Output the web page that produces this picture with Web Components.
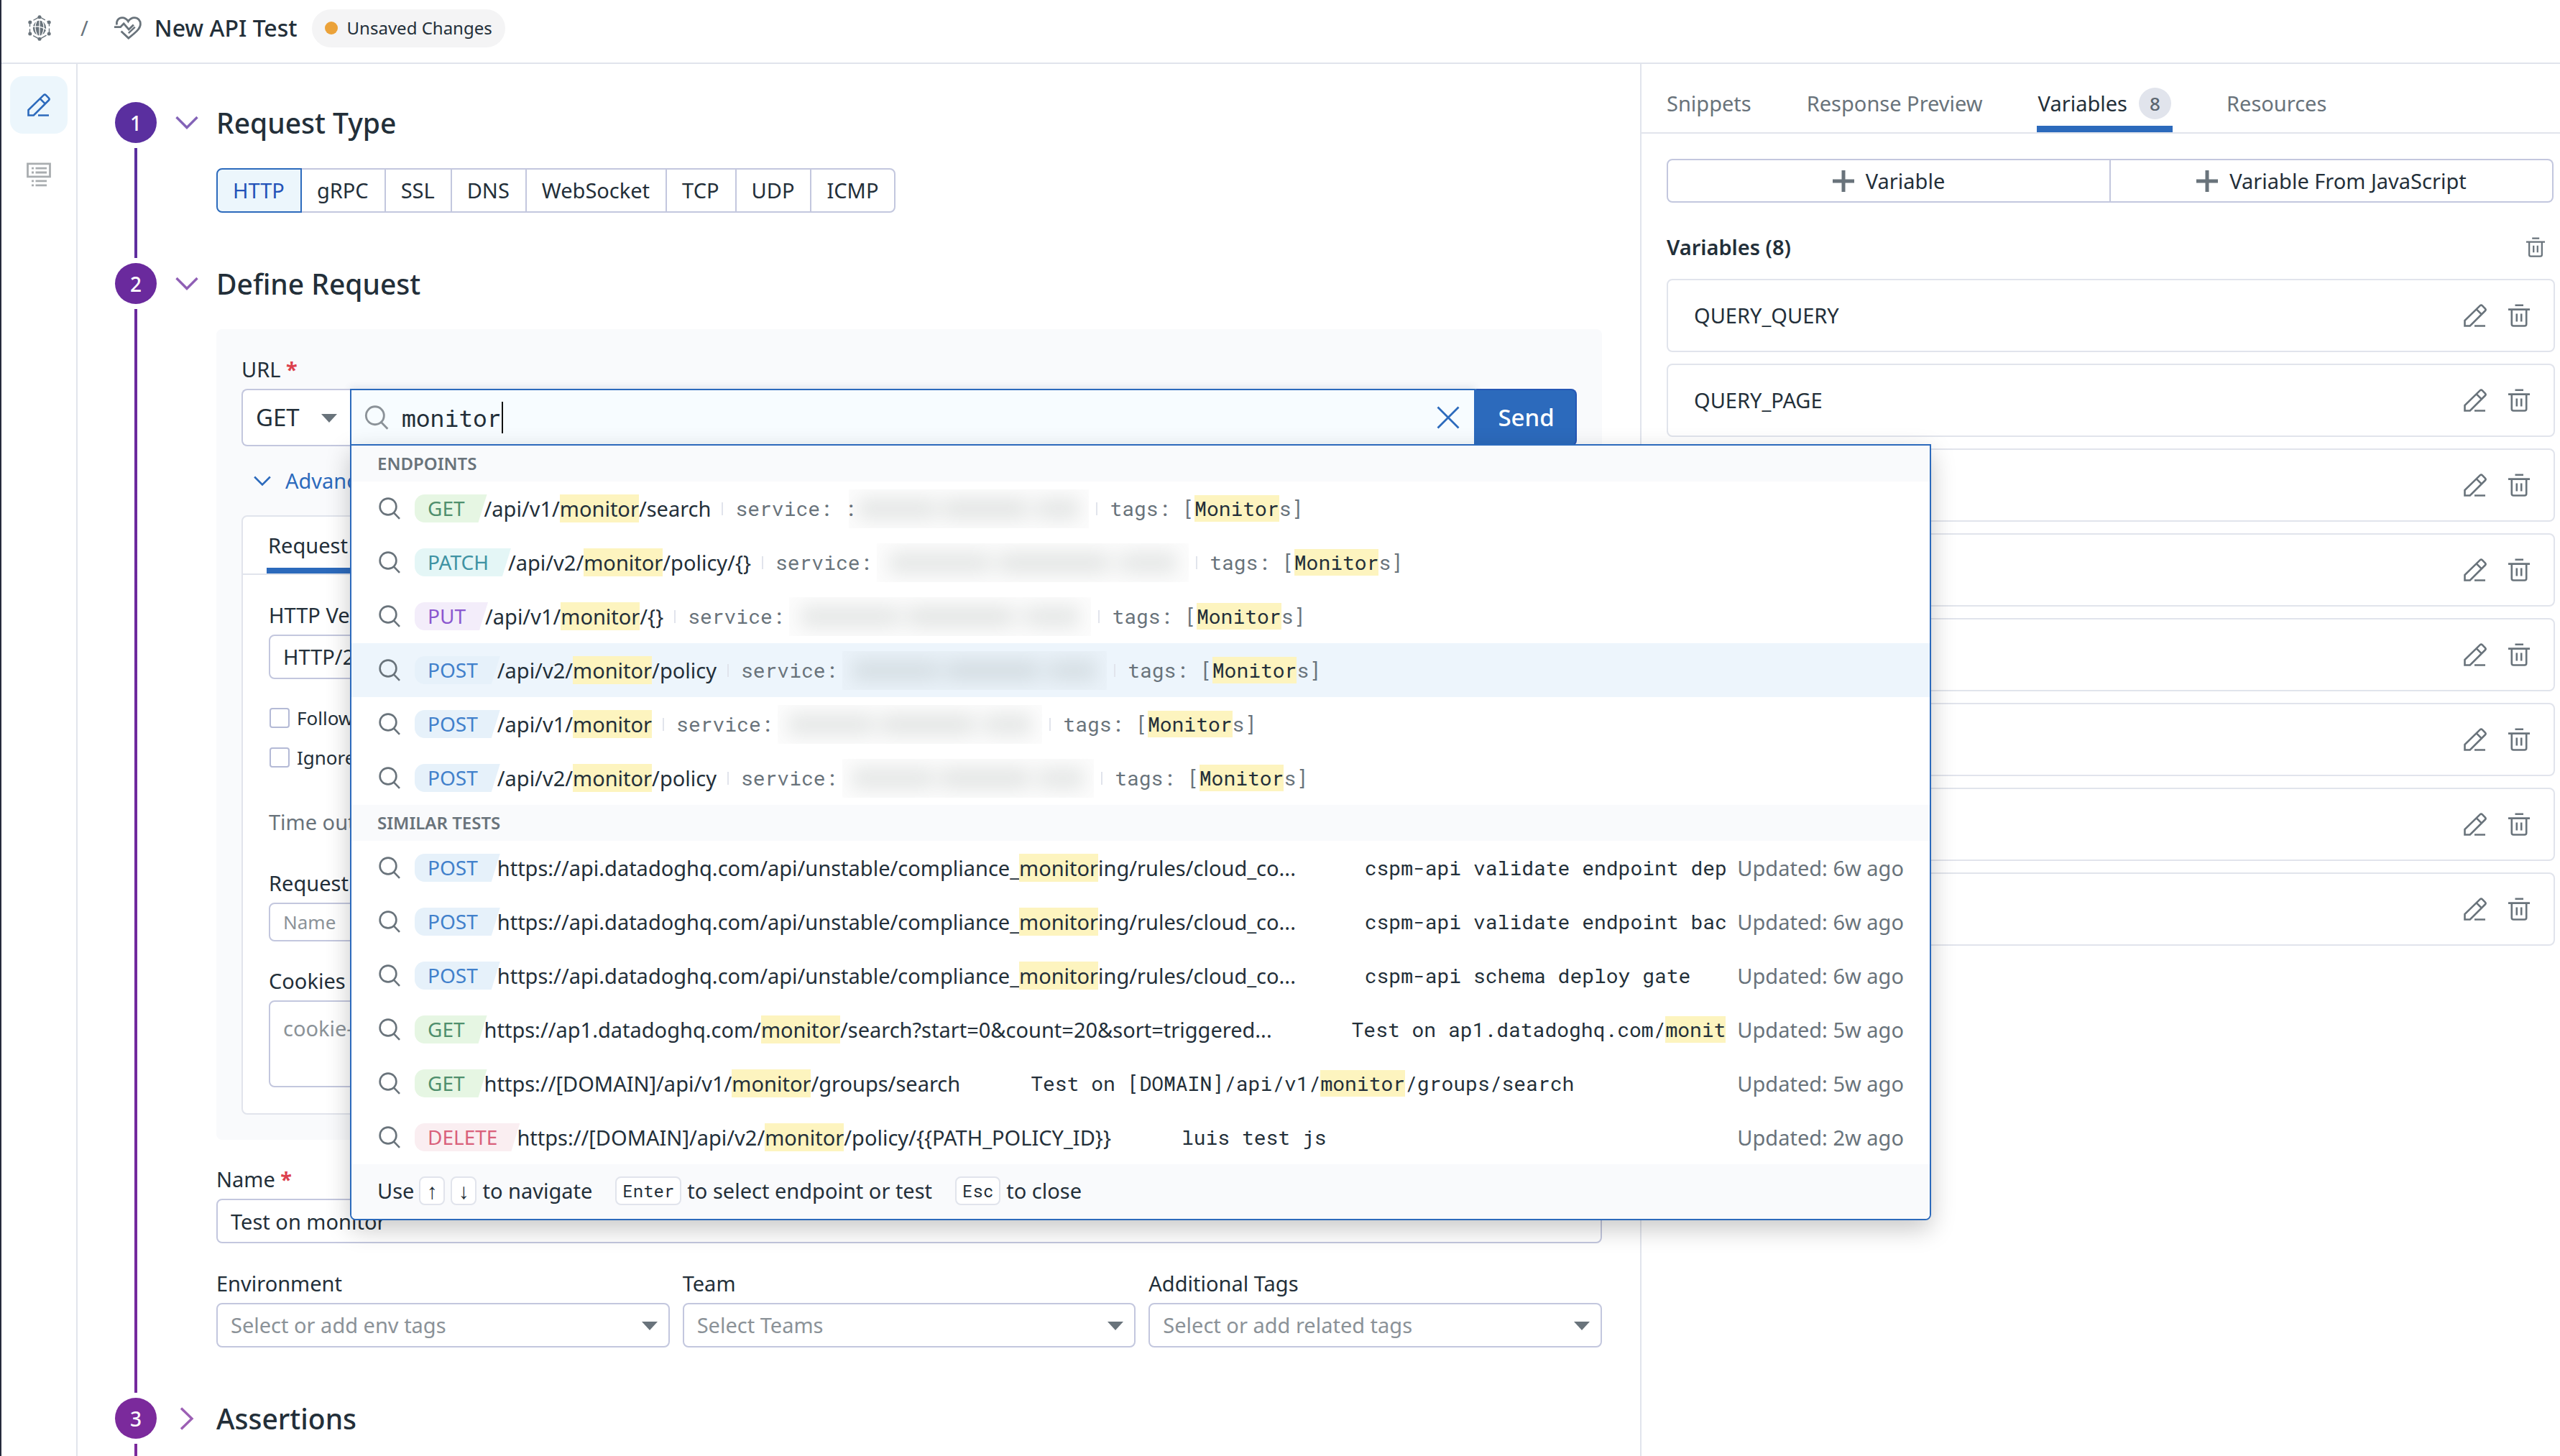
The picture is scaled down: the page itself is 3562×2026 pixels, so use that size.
<!DOCTYPE html>
<html lang="en">
<head>
<meta charset="utf-8">
<title>New API Test</title>
<style>
:root{
  --ink:#232f39; --muted:#69737b; --hint:#8b9298; --blue:#2c6abc; --line:#e1e4ec; --edge:#c3c7de;
  --wash:#f9fafc; --select:#edf5fc; --mark:#fdf4bf;
  --mono:"Roboto Mono","Noto Sans Mono","Liberation Mono",monospace;
}
*{box-sizing:border-box}
body{margin:0;min-height:100vh;display:flex;flex-direction:column;background:#fff;color:var(--ink);
  font:29px/38px "Noto Sans",sans-serif;border-left:2px solid #262b3d}
.shell{flex:1;display:flex}
main{flex:1;min-width:0;display:flex;flex-direction:column;padding:53px 53px 0 52px}
aside{flex:none;width:1280px;border-left:2px solid var(--line)}
.panel{background:var(--wash);border-radius:8px;padding:37px 35px 35px}
.trio{display:grid;grid-template-columns:1fr 1fr 1fr;gap:18px;margin-top:37px}
.name{margin-top:36px}
</style>
</head>
<body>
<app-header>New API Test</app-header>
<div class="shell">
  <side-nav></side-nav>
  <main>
    <step-section num="1" tone="#5a2f9f" next="#5f2e9f" heading="Request Type" open>
      <type-picker options="HTTP,gRPC,SSL,DNS,WebSocket,TCP,UDP,ICMP"></type-picker>
    </step-section>
    <step-section num="2" tone="#6a2a9d" next="#75299d" heading="Define Request" open>
      <div class="panel">
        <url-bar></url-bar>
        <advanced-options></advanced-options>
      </div>
      <form-field class="name" kind="text" label="Name" required value="Test on monitor"></form-field>
      <div class="trio">
        <form-field kind="select" label="Environment" hint="Select or add env tags"></form-field>
        <form-field kind="select" label="Team" hint="Select Teams"></form-field>
        <form-field kind="select" label="Additional Tags" hint="Select or add related tags"></form-field>
      </div>
    </step-section>
    <step-section num="3" tone="#7b2a9c" next="#7b2a9c" heading="Assertions" last></step-section>
  </main>
  <aside><variables-panel></variables-panel></aside>
</div>

<script>
const BASE = `*{box-sizing:border-box}
button,input,select,textarea{font:inherit;color:inherit;margin:0;border-radius:0;outline:none}
button{background:none;border:0;padding:0;cursor:pointer}
mark{background:var(--mark);color:inherit}
a{color:inherit;text-decoration:none}
`;
function define(name, css, render) {
  customElements.define(name, class extends HTMLElement {
    connectedCallback() {
      if (this.shadowRoot) return;
      const t = document.createElement('template');
      t.innerHTML = `<style>${BASE}${css}</style>${render(this)}`;
      this.attachShadow({mode: 'open'}).append(t.content.cloneNode(true));
    }
  });
}

const ICONS = {
  pencil: ['0 0 32 32', '<path d="M1.5 30.5V23L22.7 2.4q1.6-1.6 3.2 0l3.9 3.9q1.6 1.6 0 3.2L8.8 30.5zM17.8 7.4l7 7M15 30.5h15" stroke-width="2.6"/>'],
  trash: ['0 0 30 32', '<path d="M9.5 1.8h11.5M0 7.6h30M4.8 8v20q0 2.5 2.5 2.5h15.4q2.5 0 2.5-2.5V8M11.8 13.5v11M18.2 13.5v11" stroke-width="2.6"/>'],
  search: ['0 0 30 31', '<circle cx="13" cy="13" r="11.4" stroke-width="2.6"/><path d="M20.6 21.2l8.4 8.6" stroke-width="2.6"/>'],
  close: ['0 0 32 32', '<path d="M1.5 1.5l29 29M30.5 1.5l-29 29" stroke-width="2.8"/>'],
  plus: ['0 0 30 30', '<path d="M15 0v30M0 15h30" stroke-width="5"/>'],
  down: ['0 0 32 20', '<path d="M1.5 2L16 16.5 30.5 2" stroke-width="3.4"/>'],
  right: ['0 0 20 32', '<path d="M2 1.5L17 16 2 30.5" stroke-width="3.4"/>'],
  caret: ['0 0 22 12', '<path d="M0 0h22L11 12z" fill="currentColor" stroke="none"/>'],
  heart: ['0 0 38 32', '<path d="M3.5 11.5C2.6 5 6.5 1.6 11 1.6c3.6 0 6.4 2 8.4 5.2C21.5 3.6 24.5 1.6 28 1.6c5 0 8.6 4 8.4 9-.2 6.4-6.5 11.4-16.6 19.5L9.6 20.5M0 14.7h8.6l4.6-4.8 7 8 6.7-6.4" stroke-width="2.8"/><path d="M19.8 23.2l9-8.6" stroke-width="2.4"/>'],
  globe: ['0 0 32 36', '<path d="M16 2.5L29.5 10v16L16 33.5 2.5 26V10z" stroke-width="1.4" stroke-dasharray="9 3"/><circle cx="16" cy="18" r="11.6" fill="#fff" stroke="none"/><ellipse cx="16" cy="18" rx="9.2" ry="10.4" fill="currentColor" stroke="none"/><path d="M16 7v22M6 16q10-2 20 4.5M12.2 8q-5 10 1 20.5M19.8 8q5 10-1 20.5" stroke="#fff" stroke-width="1.3"/><g fill="currentColor" stroke="none"><circle cx="16" cy="2.8" r="2.5"/><circle cx="16" cy="33.2" r="2.5"/><circle cx="2.8" cy="10" r="2.5"/><circle cx="29.2" cy="10" r="2.5"/><circle cx="2.8" cy="26" r="2.5"/><circle cx="29.2" cy="26" r="2.5"/></g>'],
  list: ['0 0 34 34', '<path d="M1.5 1.8h31v18h-31z" stroke-width="2.8"/><path d="M7 8.2h3M12.5 8.2H28M7 14h3M12.5 14H28M7 25.8h3M12.5 25.8H28M7 31.8h3M12.5 31.8H28" stroke-width="2.8"/>'],
};
define('ui-icon', `:host{display:inline-flex;flex:none}svg{width:100%;height:100%;display:block;overflow:visible}`,
  el => { const [box, body] = ICONS[el.getAttribute('name')];
    return `<svg viewBox="${box}" fill="none" stroke="currentColor" aria-hidden="true">${body}</svg>`; });

define('app-header', `
:host{display:flex;align-items:center;height:89px;padding:0 0 9px 37px;border-bottom:2px solid var(--line)}
.globe{width:32px;height:36px;color:var(--muted)}
.slash{margin:0 36px 0 41px;color:var(--muted)}
.heart{width:38px;height:32px;color:var(--muted)}
h1{margin:0 20px 0 18px;font-size:32px;line-height:44px;font-weight:500}
.pill{display:flex;align-items:center;gap:13px;height:53px;padding:0 18px;border-radius:27px;background:#f4f4f5;font-size:24px}
i{width:18px;height:18px;border-radius:50%;background:#eba239}`,
  () => `<ui-icon class="globe" name="globe"></ui-icon><span class="slash">/</span>
<ui-icon class="heart" name="heart"></ui-icon><h1><slot></slot></h1><span class="pill"><i></i>Unsaved Changes</span>`);

define('side-nav', `
:host{display:flex;flex-direction:column;align-items:center;width:106px;flex:none;padding-top:17px;border-right:2px solid var(--line)}
button{display:flex;align-items:center;justify-content:center;width:80px;height:80px;margin-bottom:17px;border-radius:18px;color:#a9adb0}
.on{background:#ecf6fc;color:var(--blue)}
.on ui-icon{width:32px;height:32px}
ui-icon{width:34px;height:34px}`,
  () => `<button class="on" aria-label="Edit"><ui-icon name="pencil"></ui-icon></button><button aria-label="Results"><ui-icon name="list"></ui-icon></button>`);

define('step-section', `
:host{display:flex;gap:26px}
:host([last]){flex:1}
.rail{display:flex;flex-direction:column;align-items:center;width:58px;flex:none}
b{width:58px;height:57px;border-radius:50%;display:grid;place-items:center;color:#fff;font-size:28px;font-weight:500}
.line{flex:1;width:4px;margin:7px 0}
:host([last]) .line{margin-bottom:0}
.fold{width:31px;height:57px;flex:none;display:grid;place-items:center;opacity:.75}
.down{width:32px;height:20px}.right{width:20px;height:32px}
.body{flex:1;min-width:0;padding-bottom:70px}
:host([last]) .body{padding-bottom:0}
h2{margin:0 0 35px;font-size:39px;line-height:57px;font-weight:500}
:host([last]) h2{margin:0}`,
  el => { const a = n => el.getAttribute(n), dir = el.hasAttribute('open') ? 'down' : 'right';
    return `<div class="rail"><b style="background:${a('tone')}">${a('num')}</b><div class="line" style="background:linear-gradient(${a('tone')},${a('next')})"></div></div>
<button class="fold" aria-label="Toggle section" style="color:${a('tone')}"><ui-icon class="${dir}" name="${dir}"></ui-icon></button>
<div class="body"><h2>${a('heading')}</h2><slot></slot></div>`; });

define('type-picker', `
:host{display:flex;height:62px}
button{padding:0 22px 0 21px;border:2px solid var(--edge);margin-left:-2px}
button.on{position:relative;margin:0;color:#2453b8;background:#ecf6fc;border-color:var(--blue);border-radius:8px 0 0 8px}
button:last-child{border-radius:0 8px 8px 0}`,
  el => el.getAttribute('options').split(',').map((o, i) => `<button${i ? '' : ' class="on"'}>${o}</button>`).join(''));

define('form-field', `
:host{display:block}
label{display:block;margin-bottom:8px}
label em{color:#dc3f4d;font-style:normal;font-weight:700}
.box{position:relative;display:flex}
input,select,textarea{width:100%;height:62px;padding:0 18px;background:#fff;border:2px solid var(--edge);border-radius:8px;appearance:none;resize:none;display:block}
:host([compact]) input{height:54px;font-size:26px}
textarea{height:121px;padding-top:18px;line-height:38px}
::placeholder{color:var(--hint);opacity:1}
select.hint{color:var(--hint)}
ui-icon{position:absolute;right:17px;top:26px;width:22px;height:12px;color:var(--muted);pointer-events:none}`,
  el => { const a = n => el.getAttribute(n) || '', k = a('kind');
    const c = k === 'select' ? `<select id="f" class="${a('hint') ? 'hint' : ''}"><option>${a('hint') || a('value')}</option></select><ui-icon name="caret"></ui-icon>`
      : k === 'area' ? `<textarea id="f" placeholder="${a('hint')}"></textarea>`
      : `<input id="f" type="text" value="${a('value')}" placeholder="${a('hint')}">`;
    return `<label for="f">${a('label')}${el.hasAttribute('required') ? ' <em>*</em>' : ''}</label><div class="box">${c}</div>`; });

define('url-bar', `
:host{display:block}
label{display:block;margin-bottom:8px}
label em{color:#dc3f4d;font-style:normal;font-weight:700}
.row{position:relative;display:flex;height:80px;font-size:33px}
.verb{position:relative;width:151px;flex:none}
.verb select{width:100%;height:100%;padding:0 18px;appearance:none;background:#fff;border:2px solid var(--edge);border-right:0;border-radius:8px 0 0 8px}
.verb ui-icon{position:absolute;right:18px;top:35px;width:22px;height:12px;color:var(--muted);pointer-events:none}
.find{flex:1;min-width:0;display:flex;align-items:center;padding:0 20px 0 18px;background:#f7fcff;border:2px solid var(--blue);box-shadow:0 -2px 10px rgba(30,60,110,.12);color:var(--hint)}
.find .s{width:34px;height:34px;margin-right:18px}
.find input{field-sizing:content;min-width:20px;height:48px;padding:0;border:0;background:none;font-family:var(--mono);color:var(--ink);caret-color:transparent}
.find i{width:2px;height:44px;background:#111}
.find button{margin-left:auto;color:var(--blue);display:flex}
.find .x{width:32px;height:32px}
.send{width:141px;flex:none;background:var(--blue);color:#fff;font-weight:500;border:2px solid #2556b5;border-left-color:var(--blue);border-radius:0 8px 8px 0}
suggest-menu{position:absolute;left:151px;top:77px;z-index:5}`,
  () => `<label for="u">URL <em>*</em></label>
<div class="row"><div class="verb"><select aria-label="Method"><option>GET</option></select><ui-icon name="caret"></ui-icon></div>
<div class="find"><ui-icon class="s" name="search"></ui-icon><input id="u" type="text" value="monitor"><i></i><button aria-label="Clear"><ui-icon class="x" name="close"></ui-icon></button></div>
<button class="send">Send</button><suggest-menu></suggest-menu></div>`);

define('method-tag', `
:host{display:block;flex:none;height:39px;font-size:28px;line-height:39px;padding:0 31px 0 18px;margin-right:-4px;border-radius:14px 0 0 14px;clip-path:polygon(0 0,100% 0,calc(100% - 12px) 100%,0 100%)}
:host([verb=GET]){background:#e6f6e3;color:#4f8f6d}
:host([verb=PATCH]){background:#e4f6f6;color:#3f93a3}
:host([verb=PUT]){background:#f3edfa;color:#8b57cf}
:host([verb=POST]){background:#e6f1fa;color:#4180cb}
:host([verb=DELETE]){background:#faeef1;color:#d9607b}`,
  el => el.getAttribute('verb'));

const hit = s => s.replace(/monitor?/gi, m => `<mark>${m}</mark>`).replace(/monit$/, '<mark>monit</mark>');
const ROW = `
:host{display:flex;align-items:center;height:75px;padding:0 36px 0 38px}
.s{width:30px;height:31px;margin-right:20px;color:var(--muted)}
a{white-space:nowrap}
`;
define('endpoint-row', ROW + `
:host([active]){background:var(--select)}
.bar{width:2px;height:18px;margin:0 17px 0 15px;background:var(--line)}
.bar.tight{margin-left:0}
.meta{font-family:var(--mono);font-size:28px;color:var(--muted);white-space:pre}
.meta mark{color:var(--ink)}
.meta.svc{margin-right:-10px}
.blur{height:54px;margin-right:10px;overflow:hidden;background:rgba(80,96,90,.018)}
.blur i{display:block;height:100%;filter:blur(12px);opacity:.12;
 background:linear-gradient(90deg,transparent 0 3%,#50605a 5% 34%,#50605a90 36% 39%,#46564f 42% 72%,#50605a80 74% 78%,#50605a 81% 95%,transparent 97%) center/100% 32px no-repeat}`,
  el => { const a = n => el.getAttribute(n);
    return `<ui-icon class="s" name="search"></ui-icon><method-tag verb="${a('verb')}"></method-tag><a href="#">${hit(a('path'))}</a>
<span class="bar"></span><span class="meta svc">service: ${a('lead') || ''}</span><span class="blur" style="width:${a('veil')}px"><i></i></span>
<span class="bar tight"></span><span class="meta">tags: [${hit('Monitors')}]</span>`; });

define('test-row', ROW + `
.url.cut{flex:none;width:1109px}
.name{flex:1;min-width:0;overflow:hidden;margin:0 16px 0 98px;font-family:var(--mono);font-size:28px;white-space:nowrap;line-height:38px}
.when{flex:none;color:var(--muted)}`,
  el => { const a = n => el.getAttribute(n), u = a('url');
    return `<ui-icon class="s" name="search"></ui-icon><method-tag verb="${a('verb')}"></method-tag><a class="url${u.endsWith('...') ? ' cut' : ''}" href="#">${hit(u)}</a>
<span class="name">${hit(a('name'))}</span><span class="when">Updated: ${a('age')} ago</span>`; });

const ENDPOINTS = [['GET','/api/v1/monitor/search',334,':'],['PATCH','/api/v2/monitor/policy/{}',434],['PUT','/api/v1/monitor/{}',420],
  ['POST','/api/v2/monitor/policy',368],['POST','/api/v1/monitor',368],['POST','/api/v2/monitor/policy',350]];
const LONG = 'https://api.datadoghq.com/api/unstable/compliance_monitoring/rules/cloud_co...';
const TESTS = [['POST',LONG,'cspm-api validate endpoint dep','6w'],['POST',LONG,'cspm-api validate endpoint bac','6w'],['POST',LONG,'cspm-api schema deploy gate','6w'],
  ['GET','https://ap1.datadoghq.com/monitor/search?start=0&count=20&sort=triggered...','Test on ap1.datadoghq.com/monit','5w'],
  ['GET','https://[DOMAIN]/api/v1/monitor/groups/search','Test on [DOMAIN]/api/v1/monitor/groups/search','5w'],
  ['DELETE','https://[DOMAIN]/api/v2/monitor/policy/{{PATH_POLICY_ID}}','luis test js','2w']];
const esc = s => s.replace(/&/g, '&amp;');
define('suggest-menu', `
:host{display:block;width:2200px;font-size:29px;line-height:38px;background:#fff;border:2px solid var(--blue);border-radius:0 0 8px 8px;box-shadow:0 12px 34px rgba(0,0,0,.22);overflow:hidden}
h3{margin:0;padding:0 36px;height:50px;line-height:50px;font-size:24px;font-weight:600;color:var(--muted);background:var(--wash)}
footer{display:flex;align-items:center;height:76px;padding:0 36px 2px;background:var(--wash)}
kbd{height:40px;min-width:36px;padding:0 8px;margin-right:8px;border:2px solid var(--line);border-radius:8px;background:#fff;font:24px/36px var(--mono);text-align:center}
kbd.arrow{padding:0;font-size:30px}
.use{margin-right:7px}.gap{margin-right:32px}`,
  () => `<h3>ENDPOINTS</h3>${ENDPOINTS.map((r, i) => `<endpoint-row verb="${r[0]}" path="${r[1]}" veil="${r[2]}" lead="${r[3] || ''}"${i === 3 ? ' active' : ''}></endpoint-row>`).join('')}
<h3>SIMILAR TESTS</h3>${TESTS.map(r => `<test-row verb="${r[0]}" url="${esc(r[1])}" name="${r[2]}" age="${r[3]}"></test-row>`).join('')}
<footer><span class="use">Use</span><kbd class="arrow">↑</kbd><kbd class="arrow">↓</kbd><span class="gap">to navigate</span><kbd>Enter</kbd><span class="gap">to select endpoint or test</span><kbd>Esc</kbd><span>to close</span></footer>`);

define('advanced-options', `
:host{display:block}
.toggle{display:flex;align-items:center;gap:20px;margin:29px 0 29px;padding-left:17px;line-height:38px;color:var(--blue)}
.toggle ui-icon{width:24px;height:15px}
.card{border:2px solid var(--line);border-radius:8px;background:#fff;padding-bottom:36px}
.tabs{display:flex;height:81px;padding:0 33px;border-bottom:2px solid var(--line)}
.tabs a{padding:21px 2px 0;border-bottom:8px solid var(--blue)}
.in{padding:37px 36px 0;display:flex;flex-direction:column}
.check{display:flex;align-items:center;gap:10px;font-size:26px;margin-bottom:17px}
.check input{appearance:none;width:28px;height:28px;margin:0 0 0 1px;border:2px solid #b4bad6;border-radius:4px;background:#fff}
.first{margin-bottom:35px}
.time{margin:35px 0 47px;color:var(--muted)}
.half{width:800px}
.cook{margin-top:36px}`,
  () => `<button class="toggle"><ui-icon name="down"></ui-icon>Advanced Options</button>
<div class="card"><div class="tabs"><a href="#">Request Options</a></div><div class="in">
<form-field class="first half" kind="select" label="HTTP Version" value="HTTP/2"></form-field>
<label class="check"><input type="checkbox">Follow redirects</label>
<label class="check"><input type="checkbox">Ignore errors</label>
<div class="time">Time out</div>
<form-field class="half" kind="text" compact label="Request Headers" hint="Name"></form-field>
<form-field class="cook" kind="area" label="Cookies" hint="cookie-name"></form-field>
</div></div>`);

define('variable-card', `
:host{display:flex;align-items:center;height:102px;padding:0 33px 0 36px;border:2px solid var(--line);border-radius:8px}
span{flex:1}
button{display:flex;color:var(--muted)}
ui-icon{width:32px;height:32px}
button+button{margin-left:30px}
button+button ui-icon{width:30px}`,
  () => `<span><slot></slot></span><button aria-label="Edit variable"><ui-icon name="pencil"></ui-icon></button><button aria-label="Delete variable"><ui-icon name="trash"></ui-icon></button>`);

define('variables-panel', `
:host{display:block}
nav{display:flex;gap:73px;height:97px;padding:0 33px;border-bottom:2px solid var(--line);color:var(--muted)}
nav a{display:flex;align-items:center;padding:14px 2px 0;border-bottom:0 solid}
nav .on{color:var(--ink);border-bottom:9px solid var(--blue);padding-top:23px}
.n{margin-left:16px;width:45px;height:44px;border-radius:50%;background:var(--line);color:#5c6670;font-weight:500;font-size:26px;display:grid;place-items:center}
.in{padding:35px 7px 0 35px}
.add{display:flex;height:61px;margin-right:2px}
.add button{flex:1;display:flex;align-items:center;justify-content:center;gap:16px;border:2px solid var(--edge);border-radius:8px 0 0 8px}
.add button+button{border-left:0;border-radius:0 8px 8px 0}
.add ui-icon{width:30px;height:30px;color:var(--muted)}
.head{display:flex;align-items:center;justify-content:space-between;padding:43px 14px 25px 0}
h3{margin:0;font-size:29px;line-height:38px;font-weight:600}
.head button{display:flex;color:var(--muted)}
.head ui-icon{width:26px;height:28px}
.list{display:flex;flex-direction:column;gap:16px}`,
  () => `<nav><a href="#">Snippets</a><a href="#">Response Preview</a><a href="#" class="on">Variables<span class="n">8</span></a><a href="#">Resources</a></nav>
<div class="in"><div class="add"><button><ui-icon name="plus"></ui-icon>Variable</button><button><ui-icon name="plus"></ui-icon>Variable From JavaScript</button></div>
<div class="head"><h3>Variables (8)</h3><button aria-label="Delete all"><ui-icon name="trash"></ui-icon></button></div>
<div class="list"><variable-card>QUERY_QUERY</variable-card><variable-card>QUERY_PAGE</variable-card>${'<variable-card></variable-card>'.repeat(6)}</div></div>`);
</script>
</body>
</html>
